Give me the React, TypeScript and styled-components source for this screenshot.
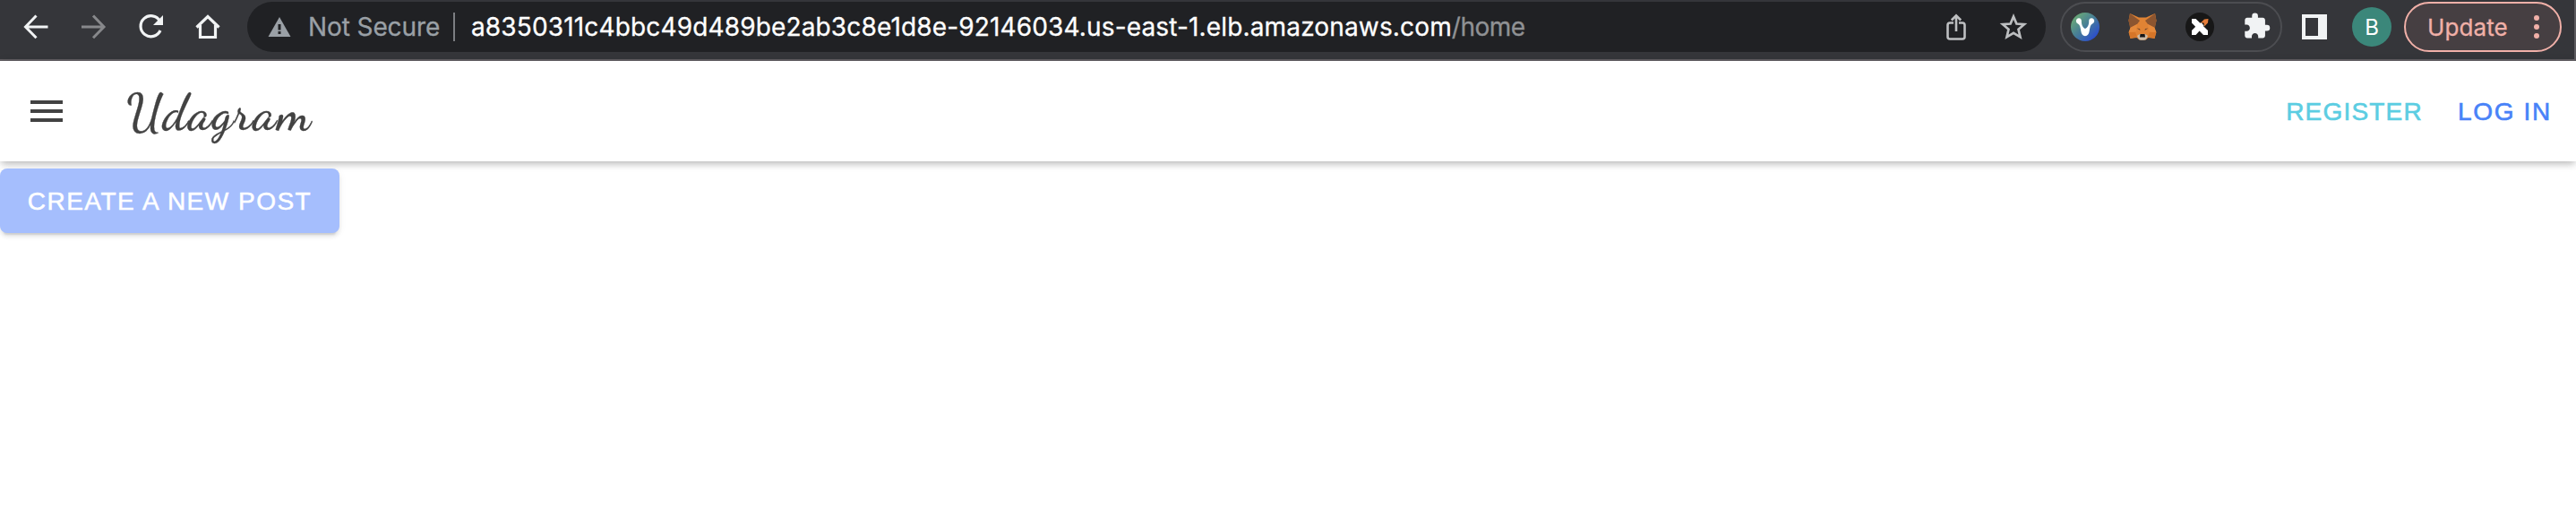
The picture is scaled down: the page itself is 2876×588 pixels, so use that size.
import React from "react";
import styled, { createGlobalStyle } from "styled-components";

const GlobalStyle = createGlobalStyle`
  *, *::before, *::after { box-sizing: border-box; }
  body { margin: 0; background: #fff; -webkit-font-smoothing: antialiased; }
  button { border: 0; padding: 0; background: none; font: inherit; }
`;

const Page = styled.div`
  min-height: 588px;
  background: #fff;
`;

const BrowserBar = styled.header`
  display: flex;
  align-items: flex-start;
  height: 68px;
  padding: 2px 14px 0 20px;
  background: #35363a;
  border-bottom: 2px solid #625f63;
  border-right: 2px solid #5c5b5f;
  font-family: Inter, sans-serif;
`;

const NavButtons = styled.nav`
  display: flex;
  gap: 24px;
  width: 256px;
  height: 56px;
  align-items: center;
`;

const NavButton = styled.button<{ $dim?: boolean }>`
  width: 40px;
  height: 40px;
  color: ${(p) => (p.$dim ? "#87888b" : "#f1f3f4")};
`;

const Glyph = styled.svg`
  display: block;
  overflow: visible;
`;

const Omnibox = styled.div`
  display: flex;
  align-items: center;
  width: 2008px;
  height: 56px;
  padding: 0 16px 0 23px;
  border-radius: 28px;
  background: #202124;
`;

const SecurityLabel = styled.span`
  width: 162px;
  margin-left: 19px;
  color: #9aa0a6;
  font-size: 28px;
  line-height: 56px;
  letter-spacing: -0.1px;
  white-space: nowrap;
  -webkit-text-stroke: 0.3px currentColor;
`;

const Divider = styled.i`
  width: 2px;
  height: 32px;
  background: #7c7e82;
`;

const Address = styled.span`
  flex: 1;
  margin-left: 18px;
  color: #fff;
  font-size: 28px;
  line-height: 56px;
  letter-spacing: 0.15px;
  white-space: nowrap;
  -webkit-text-stroke: 0.3px currentColor;
`;

const Path = styled.span`
  color: #8f9194;
  letter-spacing: -0.5px;
`;

const OmniboxActions = styled.div`
  display: flex;
  gap: 24px;
  color: #bdbfc1;
`;

const Extensions = styled.div`
  display: flex;
  align-items: center;
  gap: 32px;
  width: 248px;
  height: 56px;
  margin-left: 16px;
  padding-left: 10px;
  border: 2px solid #4c4d51;
  border-radius: 28px;
`;

const PanelIcon = styled.i`
  width: 28px;
  height: 28px;
  margin: 14px 28px 0 22px;
  border: 4px solid #f1f3f4;
  border-right-width: 10px;
`;

const Avatar = styled.div`
  width: 44px;
  height: 44px;
  margin: 6px 14px 0 0;
  border-radius: 50%;
  background: #3b877a;
  color: #fff;
  font-size: 24px;
  line-height: 45px;
  text-align: center;
`;

const UpdateButton = styled.button`
  display: flex;
  align-items: center;
  justify-content: space-between;
  width: 176px;
  height: 56px;
  padding: 0 23px 0 24px;
  border: 2px solid #f0b0a8;
  border-radius: 28px;
  background: #463f42;
  color: #f0b0a8;
  font-size: 26px;
  letter-spacing: 0.1px;
  -webkit-text-stroke: 0.3px currentColor;
`;

const Dots = styled.span`
  display: grid;
  gap: 4px;
  & > i { width: 6px; height: 6px; border-radius: 50%; background: #f0b0a8; }
`;

const AppHeader = styled.header`
  display: flex;
  align-items: center;
  height: 112px;
  padding: 0 27px 0 34px;
  background: #fff;
  box-shadow: 0 4px 8px -2px rgba(0, 0, 0, 0.2), 0 2px 10px rgba(0, 0, 0, 0.14);
`;

const MenuButton = styled.button`
  display: grid;
  gap: 6px;
  width: 36px;
  & > i { height: 4px; background: #424242; }
`;

const Brand = styled.h1`
  margin: 0 auto 0 71px;
  padding-top: 3px;
  color: #424242;
  font: 500 57px/80px "Dancing Script", cursive;
  letter-spacing: 1.6px;
  -webkit-text-stroke: 0.3px currentColor;
`;

const AuthLink = styled.button<{ $tone: string; $spacing: number }>`
  margin-left: 39px;
  padding-top: 2px;
  color: ${(p) => p.$tone};
  font: 400 28px/56px "Liberation Sans", sans-serif;
  letter-spacing: ${(p) => p.$spacing}px;
  -webkit-text-stroke: 0.6px currentColor;
`;

const Content = styled.main`
  padding-top: 8px;
`;

const CreateButton = styled.button`
  display: block;
  width: 379px;
  height: 72px;
  padding-top: 2px;
  border-radius: 8px;
  background: #a5befd;
  box-shadow: 0 6px 2px -4px rgba(0, 0, 0, 0.1), 0 4px 4px rgba(0, 0, 0, 0.07), 0 2px 10px rgba(0, 0, 0, 0.06);
  color: #fff;
  font: 400 28px/70px "Liberation Sans", sans-serif;
  letter-spacing: 1.5px;
  -webkit-text-stroke: 0.5px currentColor;
`;

const BackIcon = () => (
  <Glyph width="40" height="40" fill="none" stroke="currentColor" strokeWidth="3">
    <path d="M33.5 20H9M20.5 7.5L8.5 20l12 12.2" />
  </Glyph>
);

const ForwardIcon = () => (
  <Glyph width="40" height="40" fill="none" stroke="currentColor" strokeWidth="3">
    <path d="M7 20h24.500M20 7.500L32 20L20 32.200" />
  </Glyph>
);

const ReloadIcon = () => (
  <Glyph width="40" height="40" fill="none" stroke="currentColor" strokeWidth="3.200">
    <path d="M30.500 13.500A11.500 11.500 0 1 0 31 24" />
    <path d="M34 7v11H23z" fill="currentColor" stroke="none" />
  </Glyph>
);

const HomeIcon = () => (
  <Glyph width="40" height="40" fill="none" stroke="currentColor" strokeWidth="3.200">
    <path d="M7.500 20.500L20 8.500l12.500 12M11.500 18v13.500h17V18" />
  </Glyph>
);

const WarningIcon = () => (
  <Glyph width="26" height="22" viewBox="0 0 26 22">
    <path d="M13 0l12.500 22H.5z" fill="#9aa0a6" />
    <path d="M11.500 8h3v6.500h-3zM11.500 16h3v3h-3z" fill="#202124" />
  </Glyph>
);

const ShareIcon = () => (
  <Glyph width="40" height="40" fill="none" stroke="currentColor" strokeWidth="2.600">
    <path d="M17 15.500h-4a2.500 2.500 0 0 0-2.500 2.500v13a2.500 2.500 0 0 0 2.500 2.500h14a2.500 2.500 0 0 0 2.500-2.500V18a2.500 2.500 0 0 0-2.500-2.500h-4M20 25V8M14.800 12.500L20 7.300l5.200 5.200" />
  </Glyph>
);

const StarIcon = () => (
  <Glyph width="40" height="40" fill="none" stroke="currentColor" strokeWidth="2.700">
    <path d="M20 8.500l3.400 8 8.600.7-6.500 5.600 2 8.500L20 26.800l-7.500 4.500 2-8.500L8 17.200l8.600-.7z" />
  </Glyph>
);

const SwirlExtension = () => (
  <Glyph width="32" height="32">
    <defs>
      <linearGradient id="swirl" x1="0" y1="0" x2="1" y2="1">
        <stop offset="0.120" stopColor="#6aa976" />
        <stop offset="0.500" stopColor="#467c98" />
        <stop offset="0.850" stopColor="#2c4fcb" />
      </linearGradient>
    </defs>
    <circle cx="16" cy="16" r="16" fill="url(#swirl)" />
    <path d="M9 6.200c2 0 3.100 1.600 2.900 3.500-.2 3 1.300 7.500 4.100 8.200 2.900-.7 4.400-5.200 4.200-8.200-.2-1.900 1-3.500 2.900-3.500s3.100 1.400 3.100 3-.8 2.600-2.200 3.200c-2.300 1.200-2.700 4.300-3.300 8.200-.4 3.500-1.900 5.600-4.700 5.600s-4.300-2.100-4.700-5.600c-.6-3.900-1-7-3.300-8.200-1.400-.6-2.100-1.700-2.100-3.200s1.200-3 3.100-3z" fill="#fff" />
  </Glyph>
);

const FoxExtension = () => (
  <Glyph width="32" height="32">
    <path d="M2 1l10 4.500h8L30 1l1.500 8-2 8 2 5-2 7-7-1-3 2.500h-7L9.500 28l-7 1-2-7 2-5-2-8z" fill="#e08334" />
    <path d="M2 1l11 8-3 4-8 4-1.500-8zM30 1L19 9l3 4 8 4 1.500-8z" fill="#8b5530" />
    <path d="M2.500 17L10 13l-1 8-8 1zM29.500 17L22 13l1 8 8 1z" fill="#e58a3c" />
    <path d="M1 22h7l2 5-7.500 2zM31 22h-7l-2 5 7.500 2z" fill="#d57528" />
    <path d="M9.500 17.500l3.500.5.500 2zM22.500 17.500L19 18l-.5 2z" fill="#70472e" />
    <path d="M10 26l3-2h6l3 2-2 4-2 .700h-4L12 30z" fill="#cbbba8" />
    <path d="M13.500 24h5l.5 3.500h-6z" fill="#161616" />
  </Glyph>
);

const CrossExtension = () => (
  <Glyph width="32" height="32">
    <circle cx="16" cy="16" r="16" fill="#171717" />
    <path d="M7 7h4.500L25 20v5h-5L7 11.500z" fill="#fff" />
    <path d="M7 25v-5l6-6 4.500 4.500-6 6.500z" fill="#fff" />
    <path d="M15.500 12.500l2-1.500 3 3.500-2 2.500z" fill="#fff" />
    <path d="M17 11.500L21 7.500l4.500-.500-.500 4.500-4 4-.500-4z" fill="#e57d3a" />
  </Glyph>
);

const PuzzleIcon = () => (
  <Glyph width="32" height="32" viewBox="0.3 0.6 24 24">
    <path d="M20.500 11H19V7c0-1.100-.9-2-2-2h-4V3.500a2.500 2.500 0 0 0-5 0V5H4c-1.100 0-1.990.9-1.990 2v3.800H3.500c1.490 0 2.700 1.210 2.700 2.700s-1.210 2.700-2.700 2.700H2V20c0 1.100.9 2 2 2h3.800v-1.500c0-1.490 1.210-2.700 2.700-2.700s2.700 1.210 2.700 2.700V22H17c1.100 0 2-.9 2-2v-4h1.500a2.500 2.500 0 0 0 0-5z" fill="#f1f3f4" />
  </Glyph>
);

export default function App() {
  return (
    <Page>
      <GlobalStyle />
      <BrowserBar>
        <NavButtons>
          <NavButton aria-label="Back"><BackIcon /></NavButton>
          <NavButton aria-label="Forward" $dim><ForwardIcon /></NavButton>
          <NavButton aria-label="Reload"><ReloadIcon /></NavButton>
          <NavButton aria-label="Home"><HomeIcon /></NavButton>
        </NavButtons>
        <Omnibox>
          <WarningIcon />
          <SecurityLabel>Not Secure</SecurityLabel>
          <Divider />
          <Address>
            a8350311c4bbc49d489be2ab3c8e1d8e-92146034.us-east-1.elb.amazonaws.com<Path>/home</Path>
          </Address>
          <OmniboxActions>
            <ShareIcon />
            <StarIcon />
          </OmniboxActions>
        </Omnibox>
        <Extensions>
          <SwirlExtension />
          <FoxExtension />
          <CrossExtension />
          <PuzzleIcon />
        </Extensions>
        <PanelIcon />
        <Avatar>B</Avatar>
        <UpdateButton>
          Update
          <Dots><i /><i /><i /></Dots>
        </UpdateButton>
      </BrowserBar>
      <AppHeader>
        <MenuButton aria-label="Menu"><i /><i /><i /></MenuButton>
        <Brand>Udagram</Brand>
        <AuthLink $tone="#5bcde2" $spacing={1.2}>REGISTER</AuthLink>
        <AuthLink $tone="#4882f8" $spacing={1.7}>LOG IN</AuthLink>
      </AppHeader>
      <Content>
        <CreateButton>CREATE A NEW POST</CreateButton>
      </Content>
    </Page>
  );
}
